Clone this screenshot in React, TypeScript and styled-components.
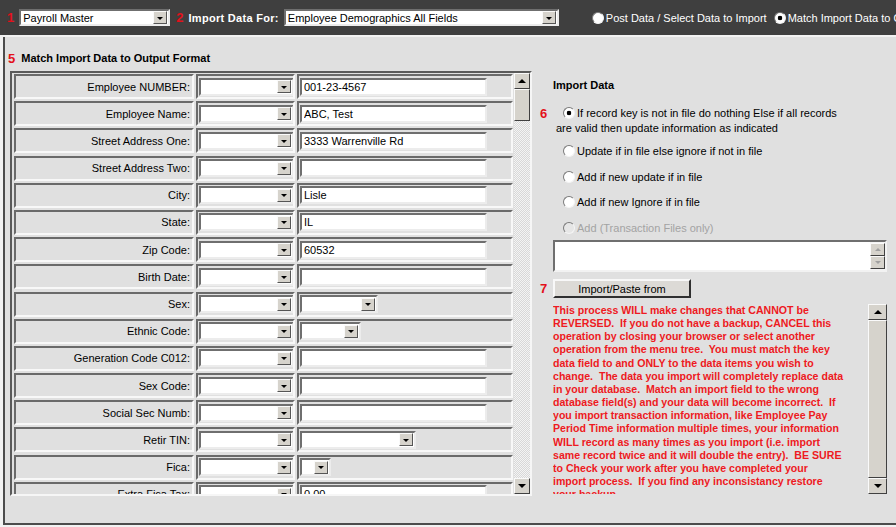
import React from 'react';
import styled, { createGlobalStyle } from 'styled-components';

const GlobalStyle = createGlobalStyle`
  html, body {
    margin: 0;
    padding: 0;
    background: #f2f2f2;
    font-family: "Liberation Sans", Arial, sans-serif;
    font-size: 11px;
    color: #000;
  }
  * { box-sizing: border-box; }
`;

const Page = styled.div`
  width: 896px;
  height: 527px;
  overflow: hidden;
`;

const TopBar = styled.div`
  display: flex;
  align-items: center;
  height: 35px;
  padding-left: 7px;
  background: #3f3f3f;
  white-space: nowrap;

  & > * {
    flex: none;
  }
`;

const StepNum = styled.span<{ $gap?: number; $lead?: number }>`
  color: #e3111b;
  font-weight: bold;
  font-size: 13px;
  margin-left: ${(p) => p.$lead ?? 0}px;
  margin-right: ${(p) => p.$gap ?? 5}px;
`;

const BarLabel = styled.span`
  color: #fff;
  font-weight: bold;
  font-size: 11px;
  letter-spacing: 0.3px;
  margin-right: 5px;
`;

const SelectBox = styled.span<{ $w: number; $h?: number }>`
  display: inline-flex;
  align-items: center;
  justify-content: space-between;
  flex: none;
  width: ${(p) => p.$w}px;
  height: ${(p) => p.$h ?? 18}px;
  padding: 0 1px 0 2px;
  background: #fff;
  border: 2px solid;
  border-color: #6f6f6f #ececec #ececec #6f6f6f;
  font-size: 11px;
  overflow: hidden;
  white-space: nowrap;
`;

const DropBtn = styled.span`
  display: flex;
  align-items: center;
  justify-content: center;
  flex: none;
  width: 14px;
  height: 13px;
  background: #d6d3cc;
  border: 1px solid;
  border-color: #fafafa #555 #555 #fafafa;

  &::after {
    content: '';
    border-left: 3px solid transparent;
    border-right: 3px solid transparent;
    border-top: 3px solid #000;
    margin-top: 1px;
  }
`;

const BarRadio = styled.label<{ $lead: number }>`
  display: inline-flex;
  align-items: center;
  color: #fff;
  font-size: 11px;
  margin-left: ${(p) => p.$lead}px;
`;

const RadioDot = styled.span<{ $checked?: boolean; $dim?: boolean }>`
  display: inline-block;
  flex: none;
  width: 12px;
  height: 12px;
  border-radius: 50%;
  background: ${(p) => {
    const fill = p.$dim ? '#e6e6e6' : '#fff';
    return p.$checked ? `radial-gradient(circle, #000 0 2px, ${fill} 2.6px)` : fill;
  }};
  border: 1px solid;
  border-color: #7a7a7a #f4f4f4 #f4f4f4 #7a7a7a;
  margin-right: 2px;
  vertical-align: -2px;
`;

const Frame = styled.div`
  display: flex;
  margin: 2px 0 0 3px;
  height: 488px;
  background: #e0e0e0;
  border-left: 2px solid #4c4c4c;
  border-bottom: 2px solid #4c4c4c;
`;

const LeftCol = styled.div`
  display: flex;
  flex-direction: column;
  flex: none;
  width: 530px;
  padding: 13px 0 0 2px;
`;

const SectionTitle = styled.div`
  display: flex;
  align-items: center;
  height: 16px;
  font-weight: bold;
  font-size: 11px;
  margin-bottom: 5px;
`;

const GridBox = styled.div`
  display: flex;
  margin-left: 3px;
  width: 522px;
  height: 425px;
  border: 2px solid;
  border-color: #5a5a5a #f6f6f6 #f6f6f6 #5a5a5a;
  overflow: hidden;
`;

const Rows = styled.div`
  flex: 1;
  display: flex;
  flex-direction: column;
  gap: 2.2px;
  padding: 1px 1px 0 2px;
  overflow: hidden;
`;

const Row = styled.div`
  display: grid;
  grid-template-columns: 180px 99px 216px;
  column-gap: 2px;
  flex: none;
  height: 25px;
`;

const Cell = styled.div<{ $right?: boolean }>`
  display: flex;
  align-items: center;
  justify-content: ${(p) => (p.$right ? 'flex-end' : 'flex-start')};
  padding: 0 2px 0 1px;
  background: #e0e0e0;
  border: 2px solid;
  border-color: #6a6a6a #f8f8f8 #f8f8f8 #6a6a6a;
  white-space: nowrap;
  overflow: hidden;
`;

const TextBox = styled.input`
  width: 187px;
  height: 18px;
  padding: 0 2px;
  margin: 0;
  background: #fff;
  border: 2px solid;
  border-color: #6f6f6f #ececec #ececec #6f6f6f;
  font-family: "Liberation Sans", Arial, sans-serif;
  font-size: 11px;
  color: #000;
  outline: none;
`;

const ScrollBar = styled.div<{ $w?: number; $solid?: boolean }>`
  display: flex;
  flex-direction: column;
  flex: none;
  width: ${(p) => p.$w ?? 16}px;
  background: ${(p) =>
    p.$solid
      ? '#d6d3cc'
      : 'repeating-conic-gradient(#f4f4f4 0 25%, #d8d8d8 0 50%) 0 0 / 2px 2px'};
`;

const ArrowBtn = styled.div<{ $down?: boolean; $dim?: boolean; $h?: number }>`
  display: flex;
  align-items: center;
  justify-content: center;
  flex: none;
  height: ${(p) => p.$h ?? 16}px;
  background: #d6d3cc;
  border: 1px solid;
  border-color: #fafafa #404040 #404040 #fafafa;

  &::after {
    content: '';
    border-left: ${(p) => (p.$h ? 3 : 4)}px solid transparent;
    border-right: ${(p) => (p.$h ? 3 : 4)}px solid transparent;
    ${(p) => (p.$down ? 'border-top' : 'border-bottom')}: ${(p) => (p.$h ? 3 : 4)}px solid
      ${(p) => (p.$dim ? '#a0a0a0' : '#000')};
  }
`;

const Thumb = styled.div<{ $h?: number }>`
  flex: ${(p) => (p.$h ? 'none' : '1')};
  height: ${(p) => (p.$h ? `${p.$h}px` : 'auto')};
  background: #d6d3cc;
  border: 1px solid;
  border-color: #fafafa #404040 #404040 #fafafa;
`;

const Track = styled.div`
  flex: 1;
`;

const RightCol = styled.div`
  display: grid;
  grid-template-columns: 14px 334px;
  align-content: start;
  padding: 42px 0 0 4px;
`;

const Num = styled.div`
  color: #e3111b;
  font-weight: bold;
  font-size: 13px;
  line-height: 15px;
  padding-left: 1px;
`;

const PanelTitle = styled.div`
  grid-column: 2;
  font-weight: bold;
  height: 27px;
`;

const Option = styled.div<{ $dim?: boolean; $after?: number }>`
  grid-column: 2;
  padding-left: 3px;
  line-height: 15px;
  margin-bottom: ${(p) => p.$after ?? 11}px;
  color: ${(p) => (p.$dim ? '#a3a3a3' : '#000')};

  & > span:first-child {
    margin-left: 7px;
  }
`;

const MemoBox = styled.div`
  grid-column: 2;
  display: flex;
  justify-content: flex-end;
  height: 32px;
  margin-bottom: 7px;
  background: #fff;
  border: 2px solid;
  border-color: #6f6f6f #f2f2f2 #f2f2f2 #6f6f6f;
`;

const MiniScroll = styled.div`
  display: flex;
  flex-direction: column;
  justify-content: space-between;
  width: 15px;
  padding: 1px 0;
  background: #f4f4f4;
`;

const PushButton = styled.button`
  width: 138px;
  height: 19px;
  padding: 0;
  margin: 0;
  background: #dcdad6;
  border: 2px solid;
  border-color: #f8f8f8 #303030 #303030 #f8f8f8;
  font-family: "Liberation Sans", Arial, sans-serif;
  font-size: 11px;
  color: #000;
`;

const WarnWrap = styled.div`
  grid-column: 1 / span 2;
  display: flex;
  height: 190px;
  margin-top: 6px;
  padding-left: 14px;
`;

const WarnText = styled.div`
  flex: 1;
  color: #ee1a22;
  font-weight: bold;
  font-size: 10.6px;
  line-height: 13.15px;
  white-space: pre;
  overflow: hidden;
`;

const fields: { label: string; value?: string; pick?: number }[] = [
  { label: 'Employee NUMBER:', value: '001-23-4567' },
  { label: 'Employee Name:', value: 'ABC, Test' },
  { label: 'Street Address One:', value: '3333 Warrenville Rd' },
  { label: 'Street Address Two:', value: '' },
  { label: 'City:', value: 'Lisle' },
  { label: 'State:', value: 'IL' },
  { label: 'Zip Code:', value: '60532' },
  { label: 'Birth Date:', value: '' },
  { label: 'Sex:', pick: 78 },
  { label: 'Ethnic Code:', pick: 61 },
  { label: 'Generation Code C012:', value: '' },
  { label: 'Sex Code:', value: '' },
  { label: 'Social Sec Numb:', value: '' },
  { label: 'Retir TIN:', pick: 116 },
  { label: 'Fica:', pick: 31 },
  { label: 'Extra Fica Tax:', value: '0.00' },
];

const warning = [
  'This process WILL make changes that CANNOT be',
  'REVERSED.  If you do not have a backup, CANCEL this',
  'operation by closing your browser or select another',
  'operation from the menu tree.  You must match the key',
  'data field to and ONLY to the data items you wish to',
  'change.  The data you import will completely replace data',
  'in your database.  Match an import field to the wrong',
  'database field(s) and your data will become incorrect.  If',
  'you import transaction information, like Employee Pay',
  'Period Time information multiple times, your information',
  'WILL record as many times as you import (i.e. import',
  'same record twice and it will double the entry).  BE SURE',
  'to Check your work after you have completed your',
  'import process.  If you find any inconsistancy restore',
  'your backup.',
].join('\n');

export default function App() {
  return (
    <Page>
      <GlobalStyle />
      <TopBar>
        <StepNum>1</StepNum>
        <SelectBox $w={151} $h={17}>
          Payroll Master
          <DropBtn />
        </SelectBox>
        <StepNum $lead={6}>2</StepNum>
        <BarLabel>Import Data For:</BarLabel>
        <SelectBox $w={275} $h={17}>
          Employee Demographics All Fields
          <DropBtn />
        </SelectBox>
        <BarRadio $lead={33}>
          <RadioDot />
          Post Data / Select Data to Import
        </BarRadio>
        <BarRadio $lead={7}>
          <RadioDot $checked />
          Match Import Data to Output Format
        </BarRadio>
      </TopBar>

      <Frame>
        <LeftCol>
          <SectionTitle>
            <StepNum $gap={6} $lead={1}>5</StepNum>
            Match Import Data to Output Format
          </SectionTitle>
          <GridBox>
            <Rows>
              {fields.map((f) => (
                <Row key={f.label}>
                  <Cell $right>{f.label}</Cell>
                  <Cell>
                    <SelectBox $w={95}>
                      <span />
                      <DropBtn />
                    </SelectBox>
                  </Cell>
                  <Cell>
                    {f.pick ? (
                      <SelectBox $w={f.pick}>
                        <span />
                        <DropBtn />
                      </SelectBox>
                    ) : (
                      <TextBox defaultValue={f.value} readOnly />
                    )}
                  </Cell>
                </Row>
              ))}
            </Rows>
            <ScrollBar>
              <ArrowBtn />
              <Thumb $h={32} />
              <Track />
              <ArrowBtn $down />
            </ScrollBar>
          </GridBox>
        </LeftCol>

        <RightCol>
          <PanelTitle>Import Data</PanelTitle>
          <Num>6</Num>
          <Option $after={8}>
            <RadioDot $checked />
            If record key is not in file do nothing Else if all records
            <br />
            are valid then update information as indicated
          </Option>
          <Option>
            <RadioDot />Update if in file else ignore if not in file
          </Option>
          <Option $after={10}>
            <RadioDot />Add if new update if in file
          </Option>
          <Option>
            <RadioDot />Add if new Ignore if in file
          </Option>
          <Option $dim $after={4}>
            <RadioDot $dim />Add (Transaction Files only)
          </Option>
          <MemoBox>
            <MiniScroll>
              <ArrowBtn $dim $h={13} />
              <ArrowBtn $dim $down $h={13} />
            </MiniScroll>
          </MemoBox>
          <Num style={{ alignSelf: 'center' }}>7</Num>
          <div>
            <PushButton type="button">Import/Paste from</PushButton>
          </div>
          <WarnWrap>
            <WarnText>{warning}</WarnText>
            <ScrollBar $w={19} $solid>
              <ArrowBtn />
              <Thumb />
              <ArrowBtn $down />
            </ScrollBar>
          </WarnWrap>
        </RightCol>
      </Frame>
    </Page>
  );
}
